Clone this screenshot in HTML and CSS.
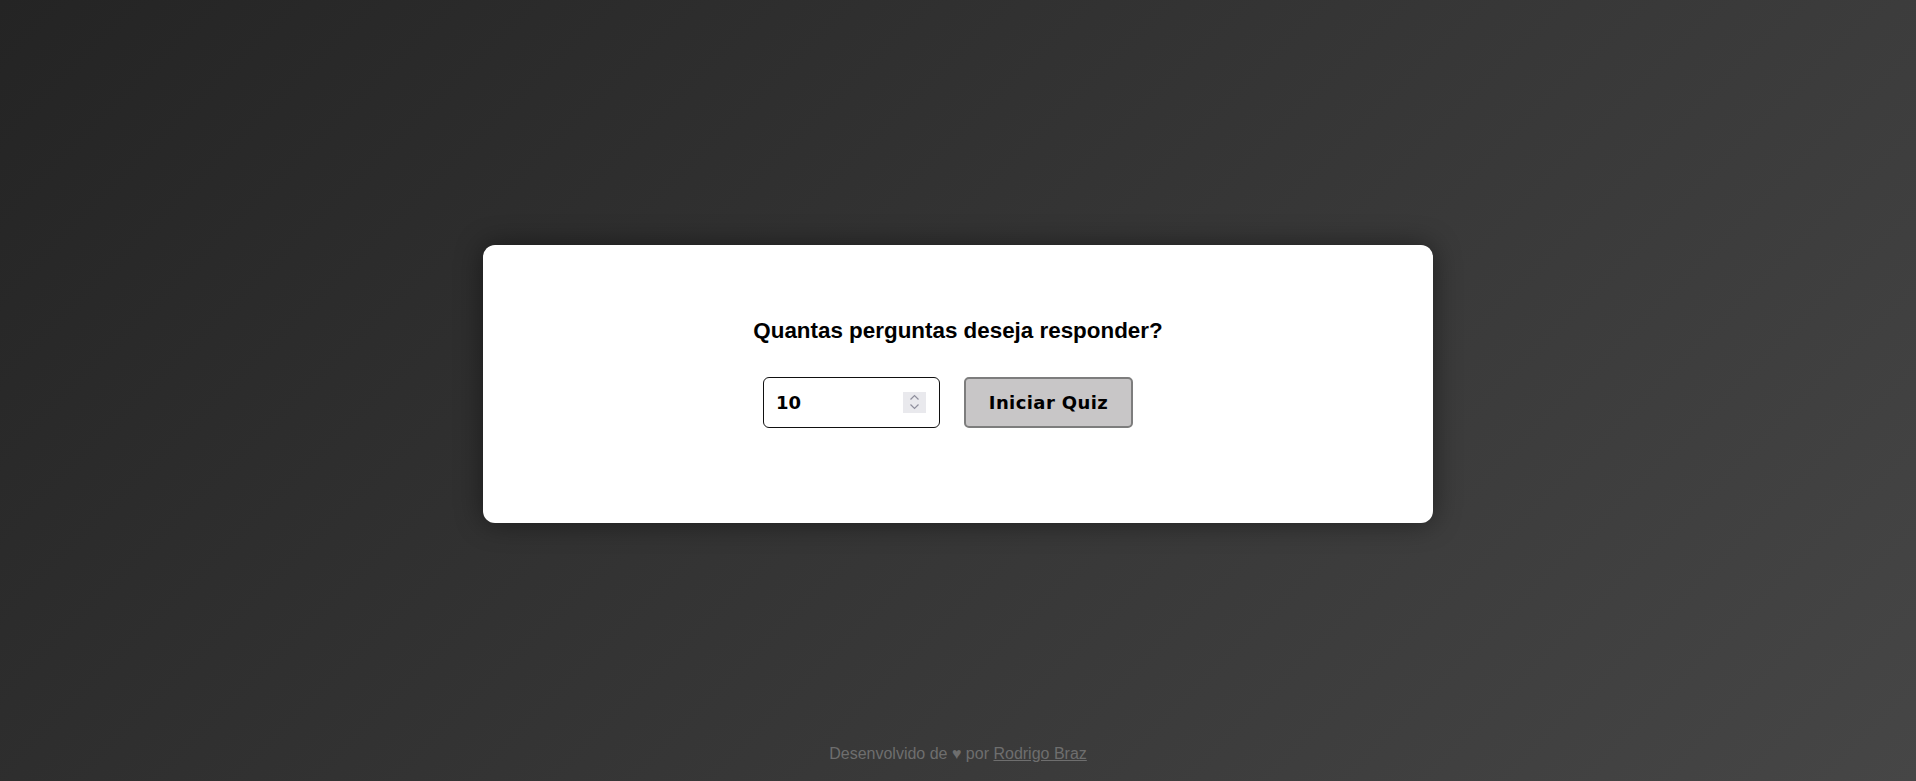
FILE: index.html
```html
<!DOCTYPE html>
<html lang="pt-BR">
<head>
<meta charset="utf-8">
<title>Quiz</title>
<link rel="stylesheet" href="styles.css">
</head>
<body>
<main class="stage">
  <section class="card">
    <h2 class="question">Quantas perguntas deseja responder?</h2>
    <div class="controls">
      <div class="number-field">
        <input class="number-input" type="number" value="10" min="1">
        <span class="spinner" aria-hidden="true">
          <svg width="23" height="21" viewBox="0 0 23 21">
            <path d="M7.5 7.5 L11.5 3.5 L15.5 7.5" fill="none" stroke="#8f8f9d" stroke-width="1.2"/>
            <path d="M7.5 12.5 L11.5 16.5 L15.5 12.5" fill="none" stroke="#8f8f9d" stroke-width="1.2"/>
          </svg>
        </span>
      </div>
      <button class="start-btn" type="button">Iniciar Quiz</button>
    </div>
  </section>
</main>
<footer class="footer">Desenvolvido de <span class="heart">♥</span> por <a class="footer-link" href="#">Rodrigo Braz</a></footer>
</body>
</html>
```
FILE: styles.css
```css
html, body {
  margin: 0;
  padding: 0;
  height: 100%;
}

body {
  display: flex;
  flex-direction: column;
  min-height: 100vh;
  background: linear-gradient(135deg, #242424 0%, #464646 100%);
  font-family: "Liberation Sans", Arial, sans-serif;
}

.stage {
  flex: 1;
  display: flex;
  align-items: center;
  justify-content: center;
  padding-top: 22px;
}

.card {
  box-sizing: border-box;
  width: 950px;
  height: 278px;
  background: #ffffff;
  border-radius: 12px;
  box-shadow: 0 0 28px rgba(0, 0, 0, 0.45);
  padding-top: 73px;
}

.question {
  margin: 0 0 33px;
  font-size: 22.4px;
  line-height: 26px;
  font-weight: bold;
  color: #000;
  text-align: center;
}

.controls {
  display: flex;
  align-items: center;
  justify-content: center;
  gap: 24px;
  padding-right: 20px;
}

.number-field {
  position: relative;
  width: 177px;
  height: 51px;
}

.number-input {
  box-sizing: border-box;
  width: 100%;
  height: 100%;
  margin: 0;
  padding: 0 40px 0 12px;
  border: 1px solid #111;
  border-radius: 6px;
  background: #fff;
  font-family: "DejaVu Sans", Verdana, sans-serif;
  font-weight: bold;
  font-size: 18px;
  color: #000;
  appearance: textfield;
  -moz-appearance: textfield;
  outline: none;
}

.number-input::-webkit-inner-spin-button,
.number-input::-webkit-outer-spin-button {
  -webkit-appearance: none;
  margin: 0;
}

.spinner {
  position: absolute;
  top: 15px;
  right: 14px;
  width: 23px;
  height: 21px;
  background: #e9e9ed;
  display: block;
}

.spinner svg {
  display: block;
}

.start-btn {
  box-sizing: border-box;
  width: 169px;
  height: 51px;
  margin: 0;
  padding: 0;
  border: 2px solid #7d7d7d;
  border-radius: 5px;
  background: #c8c6c7;
  font-family: "DejaVu Sans", Verdana, sans-serif;
  font-weight: bold;
  font-size: 18px;
  letter-spacing: 0.4px;
  color: #000;
  cursor: pointer;
}

.footer {
  text-align: center;
  font-size: 16px;
  line-height: 18px;
  padding-bottom: 18px;
  color: #6e6e6e;
}

.footer-link {
  color: #6e6e6e;
  text-decoration: underline;
}
```
